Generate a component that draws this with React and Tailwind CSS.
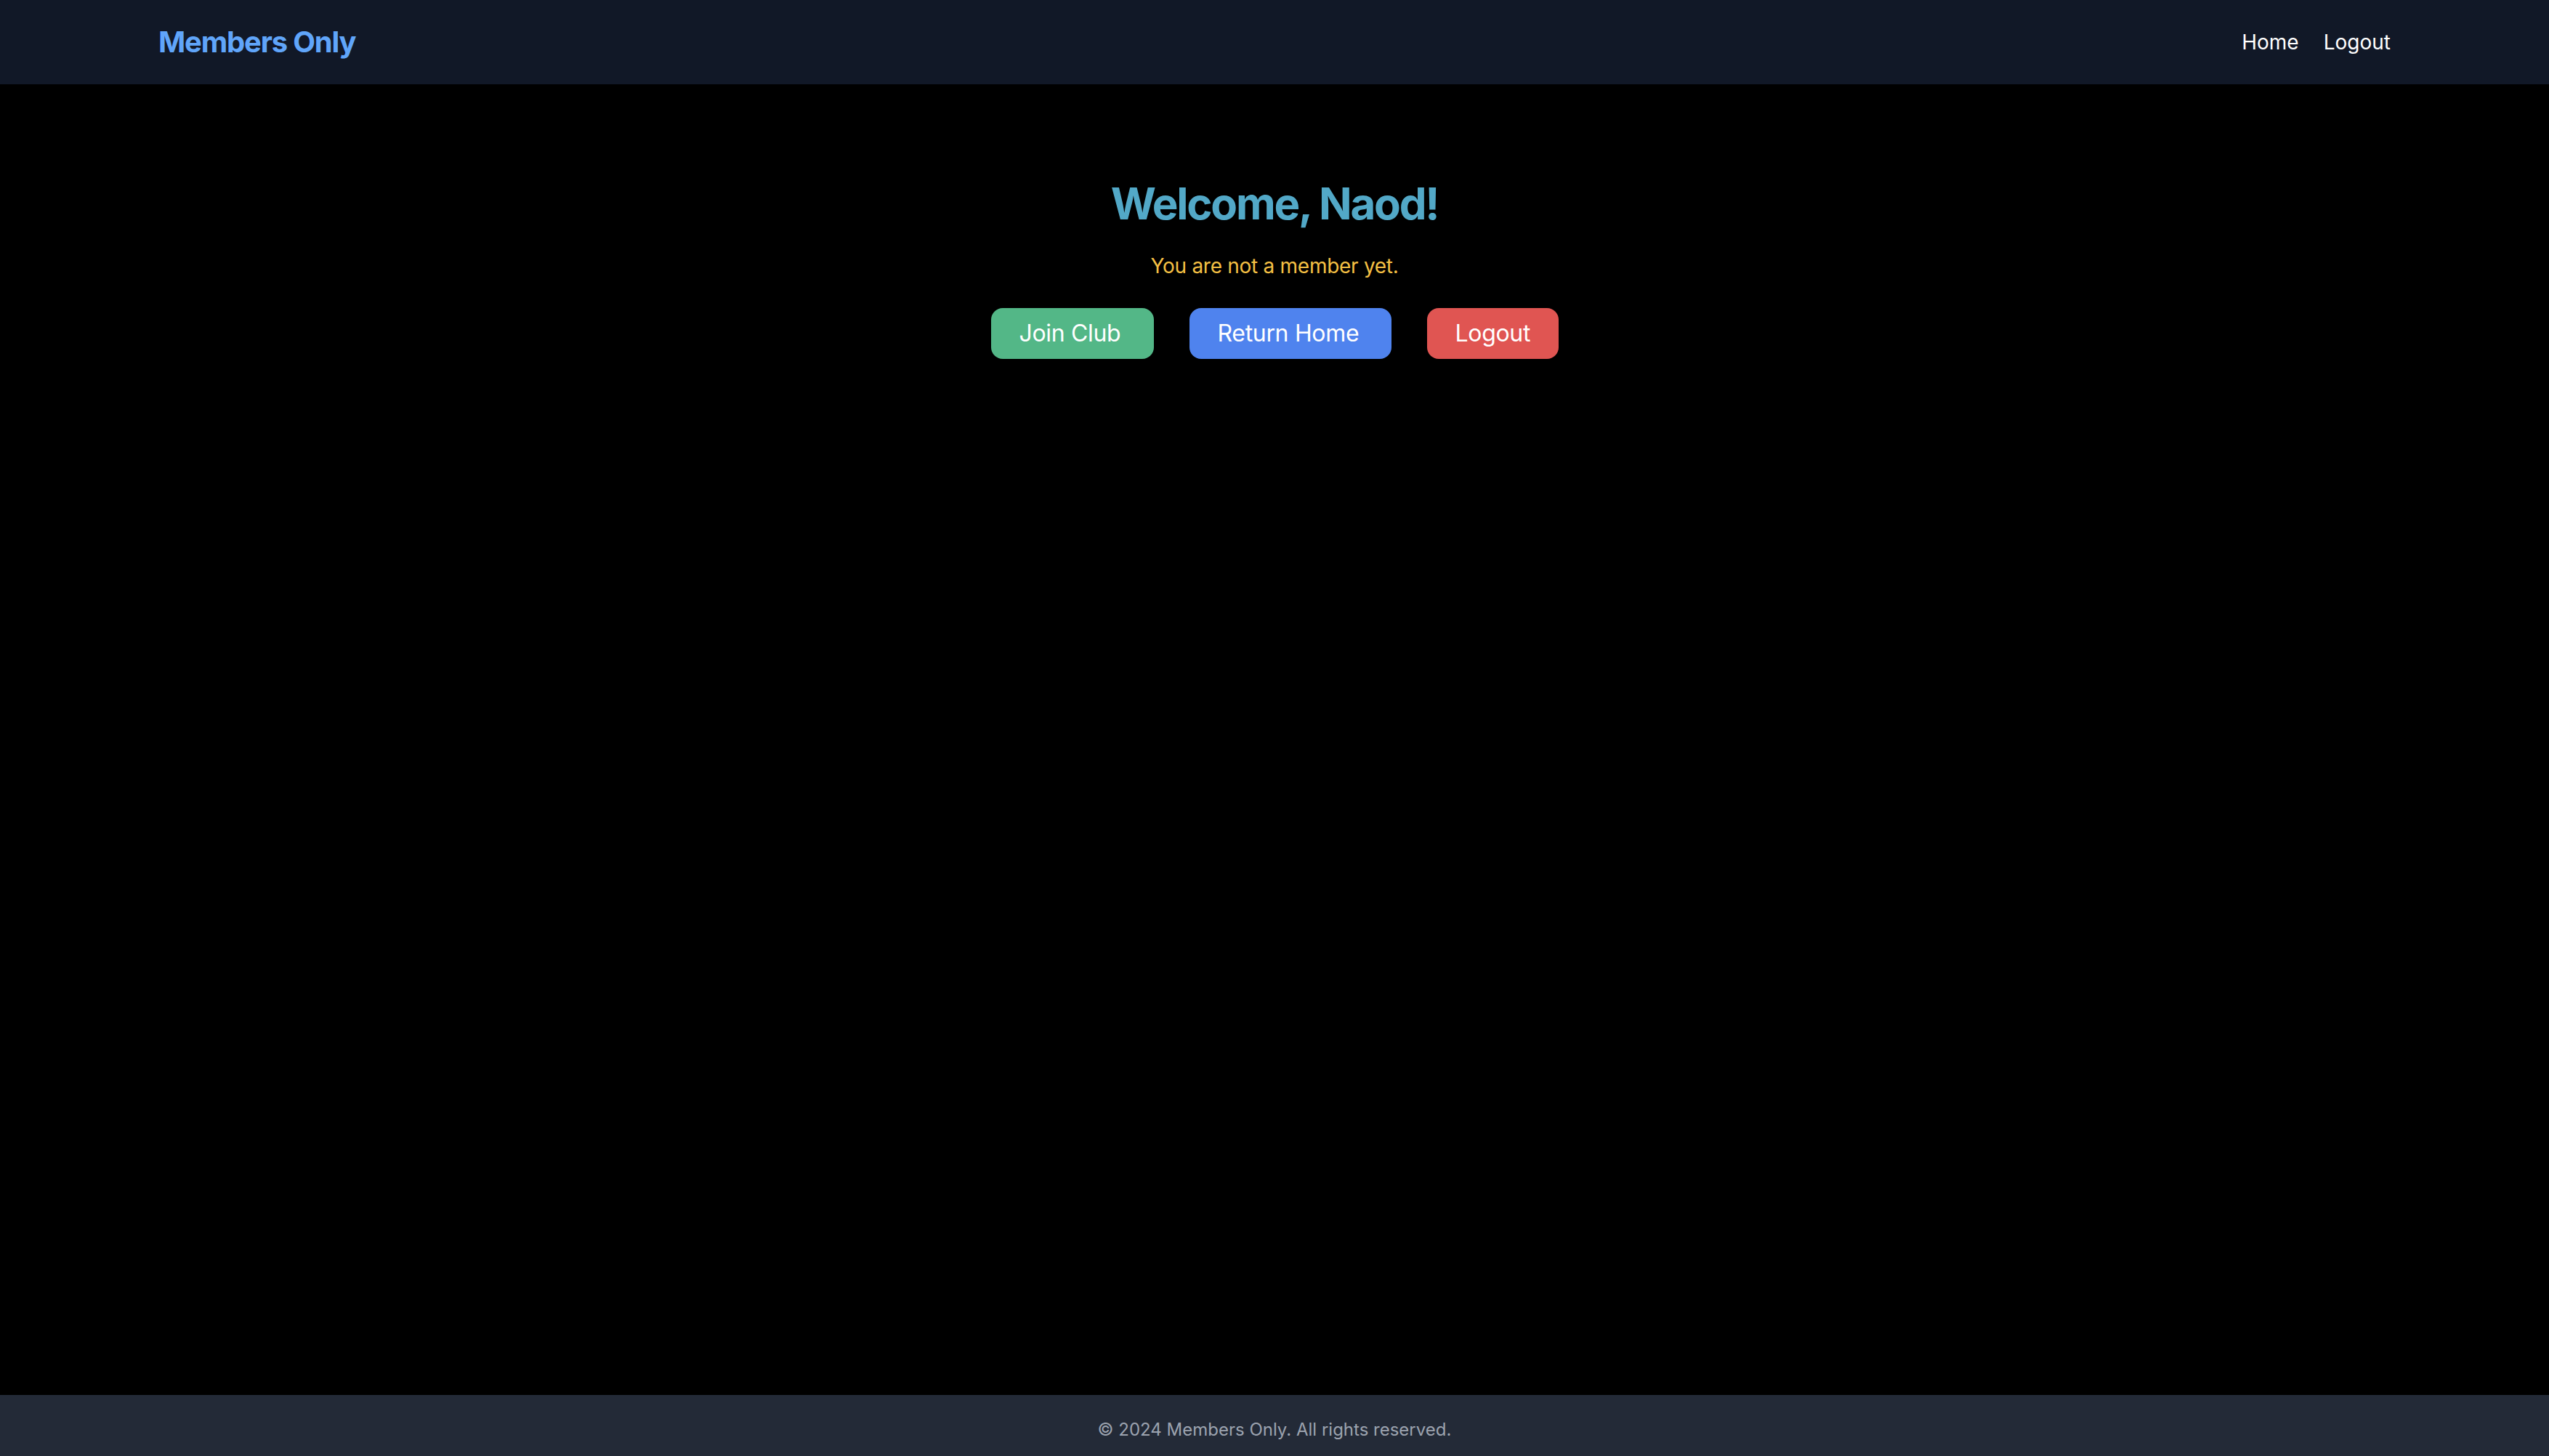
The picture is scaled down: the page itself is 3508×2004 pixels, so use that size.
import React from "react";

const NavLink = ({ children }) => (
  <a href="#" className="text-white text-[28px] leading-[40px] hover:text-gray-300">
    {children}
  </a>
);

const ActionButton = ({ children, className }) => (
  <button
    className={`h-[70px] rounded-[16px] text-white text-[32px] leading-[48px] text-left tracking-[-0.01em] ${className}`}
  >
    {children}
  </button>
);

export default function App() {
  return (
    <div className="min-h-screen flex flex-col bg-black font-['Inter','Noto_Sans',sans-serif]">
      {/* top bar */}
      <header className="bg-[#111827] h-[116px]">
        <div className="max-w-[3072px] mx-auto h-full flex items-center justify-between">
          <a href="#" className="text-[40px] leading-[56px] font-bold tracking-[-0.03em] text-[#60a5fa]">
            Members Only
          </a>
          <nav className="flex items-center gap-[34px]">
            <NavLink>Home</NavLink>
            <NavLink>Logout</NavLink>
          </nav>
        </div>
      </header>

      <main className="flex-1 flex flex-col items-center pt-[128px]">
        <h1 className="text-[60px] leading-[72px] font-bold tracking-[-0.037em] text-[#52a8c7]">Welcome, Naod!</h1>
        <p className="mt-[30px] text-[28px] leading-[40px] tracking-[-0.01em] text-[#f5c044]">You are not a member yet.</p>
        <div className="mt-[38px] flex gap-[49px]">
          <ActionButton className="w-[224px] pl-[39px] bg-[#53b787]">Join Club</ActionButton>
          <ActionButton className="w-[278px] pl-[39px] bg-[#4f83ee]">Return Home</ActionButton>
          <ActionButton className="w-[181px] pl-[39px] bg-[#e05552]">Logout</ActionButton>
        </div>
      </main>

      <footer className="bg-[#232a37] h-[84px] pt-[32px] text-center">
        <p className="text-[24px] leading-[32px] text-[#9ca3af]">© 2024 Members Only. All rights reserved.</p>
      </footer>
    </div>
  );
}
